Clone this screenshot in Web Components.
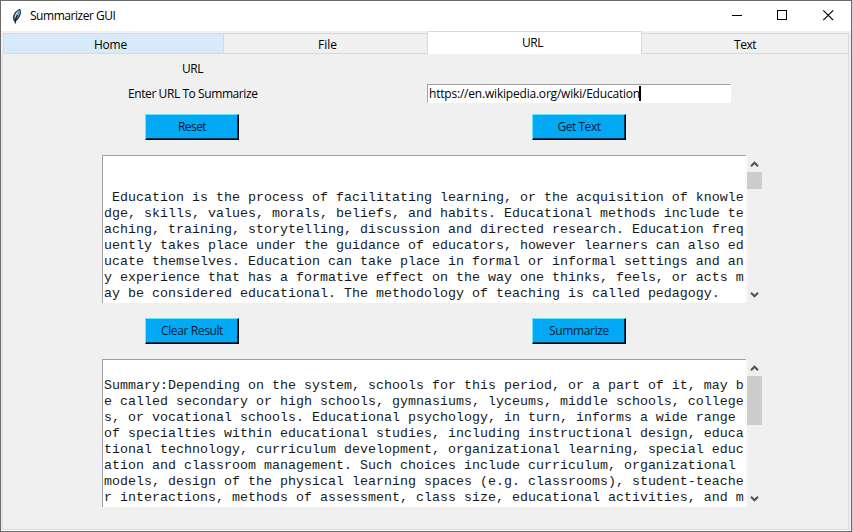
<!DOCTYPE html>
<html lang="en">
<head>
<meta charset="utf-8">
<title>Summarizer GUI</title>
<style>
html,body{margin:0;height:100%;overflow:hidden;background:#d4d4d4}
body{font:12px/16px "Open Sans","Noto Sans",sans-serif;color:#000}
</style>
</head>
<body>
<summarizer-app></summarizer-app>
<script>
function define(name, html, setup) {
  const template = document.createElement('template');
  template.innerHTML = html;
  customElements.define(name, class extends HTMLElement {
    connectedCallback() {
      if (this.shadowRoot) return;
      this.attachShadow({ mode: 'open' }).append(template.content.cloneNode(true));
      if (setup) setup(this, this.shadowRoot);
    }
  });
}

// Label whose tracking is adjusted so the text occupies a given width.
define('fit-label', `<style>
:host{display:inline-block;white-space:pre}
span{display:inline-block}
</style><span></span>`, (el, root) => {
  const span = root.querySelector('span');
  span.textContent = el.getAttribute('text');
  const width = +el.getAttribute('width');
  const n = span.textContent.length;
  const spacing = (width - span.getBoundingClientRect().width) / n;
  span.style.letterSpacing = spacing.toFixed(3) + 'px';
});

define('title-bar', `<style>
:host{display:flex;height:30px;background:#fff;align-items:center}
.feather{margin-left:10px;width:12px;height:17px;flex:none}
fit-label{margin-left:7px;flex:1}
.controls{display:flex;width:138px;height:30px}
.controls svg{width:46px;height:30px}
</style>
<svg class="feather" viewBox="0 0 12 17"><path d="M3 13.300C.8 9.500 2 4 8.900.8 11.300 3.500 9.500 10 4.900 13.300Z" fill="#22303f"/><path d="M3.500 11.500C2.500 8 4.500 4 8.400 1.900 9.900 4 8 9 4.800 11.800Z" fill="#6b9cc6"/><path d="M3.900 9.500C3.700 6.500 5.500 4 7.800 2.800L5 8.800Z" fill="#b5d3ea"/><path d="M6.500 7 4.500 11.500 4.200 15.500" fill="none" stroke="#101820" stroke-width="1.200"/></svg>
<fit-label text="Summarizer GUI" width="85.5"></fit-label>
<div class="controls">
<svg viewBox="0 0 46 30" shape-rendering="crispEdges"><path d="M19 14.500h10" stroke="#000"/></svg>
<svg viewBox="0 0 46 30" shape-rendering="crispEdges"><path d="M18.500 9.500h9v9h-9z" fill="none" stroke="#000"/></svg>
<svg viewBox="0 0 46 30"><path d="M18.300 9.300l9.900 9.900M28.200 9.300l-9.900 9.900" stroke="#000" stroke-width="1.150"/></svg>
</div>`);

define('tab-item', `<style>
:host{display:flex;box-sizing:border-box;height:21px;justify-content:center;align-items:center;background:#f0f0f0;border:1px solid #d9d9d9;border-left-width:0;padding-top:2px}
:host([hot]){background:#d8eaf9;border-left-width:1px;padding-right:6px}
:host(.file){padding-left:4px}
:host([active]){height:23px;background:#fff;border-bottom:0;border-left-width:1px;margin-left:-1px;padding:0 4px 0 0}
</style><slot></slot>`);

define('push-button', `<style>
:host{display:flex;box-sizing:border-box;width:94px;height:26px;background:#03a9f4;border:1px solid;border-color:#68e4ff #000 #000 #68e4ff;box-shadow:inset -1px -1px #003b5c;justify-content:center;align-items:center;color:#001c38}
</style><slot></slot>`);

define('text-entry', `<style>
:host{display:flex;box-sizing:border-box;width:304px;height:19px;background:#fff;border:1px solid;border-color:#a0a0a0 #fff #fff #a0a0a0;padding-left:1px;align-items:center}
i{width:2px;height:15px;background:#000;margin-left:-1px}
</style><slot></slot><i></i>`);

define('scroll-bar', `<style>
:host{display:flex;flex-direction:column;width:15px;height:148px;align-items:center;background:#f0f0f0}
svg{width:15px;height:17px;flex:none}
.thumb{width:15px;background:#cdcdcd}
.gap{flex:1}
path{fill:none;stroke:#505050;stroke-width:2}
</style>
<svg viewBox="0 0 15 17"><path d="M4 11.200 7.500 7.700 11 11.200"/></svg><div class="thumb"></div><div class="gap"></div>
<svg viewBox="0 0 15 17"><path d="M4 6.800 7.500 10.300 11 6.800"/></svg>`, (el, root) => {
  root.querySelector('.thumb').style.height = el.getAttribute('thumb') + 'px';
});

define('text-area', `<style>
:host{display:flex;width:660px;height:148px}
.page{box-sizing:border-box;width:645px;height:148px;background:#fff;border-left:1px solid #a0a0a0;border-top:1px solid #a0a0a0;border-right:2px solid #fbfbfb;padding:2px 0 0 1px;overflow:hidden}
::slotted(pre){margin:0;font:13.333px/16px "Liberation Mono",monospace;color:#1a1a1a}
</style><div class="page"><slot></slot></div><scroll-bar></scroll-bar>`, (el, root) => {
  const bar = root.querySelector('scroll-bar');
  bar.setAttribute('thumb', el.getAttribute('thumb'));
  if (bar.shadowRoot) bar.shadowRoot.querySelector('.thumb').style.height = el.getAttribute('thumb') + 'px';
});

define('summarizer-app', `<style>
:host{display:block;box-sizing:border-box;width:852px;height:532px;border:1px solid #6a6a6a;background:#f0f0f0}
.tabs{display:grid;grid-template-columns:221px 204px 214px 207px;align-items:end;height:23px;padding-left:2px}
.body{box-sizing:border-box;width:847px;height:476px;margin-left:1px;border:1px solid #dcdcdc;border-top:0;box-shadow:0 1px #fff;padding-left:99px}
.row{display:grid;grid-template-columns:183px 142px 304px}
.row>*{justify-self:start}
.labels{height:30px;padding-top:7px;box-sizing:border-box}
.labels fit-label{margin-left:80px}
.entry{height:19px;align-items:center}
.entry .cap{margin-left:26px}
.buttons{grid-template-columns:387px 94px;padding-left:43px}
.first{margin-top:11px;margin-bottom:15px}
.second{margin-top:15px;margin-bottom:15px}
</style>
<title-bar></title-bar>
<div class="tabs">
<tab-item hot><fit-label text="Home" width="33"></fit-label></tab-item>
<tab-item class="file"><fit-label text="File" width="19"></fit-label></tab-item>
<tab-item active><fit-label text="URL" width="21"></fit-label></tab-item>
<tab-item><fit-label text="Text" width="22"></fit-label></tab-item>
</div>
<div class="body">
<div class="row labels"><fit-label text="URL" width="21"></fit-label></div>
<div class="row entry"><fit-label class="cap" text="Enter URL To Summarize" width="129.5"></fit-label><span></span><text-entry><fit-label text="https://en.wikipedia.org/wiki/Education" width="211"></fit-label></text-entry></div>
<div class="row buttons first"><push-button><fit-label text="Reset" width="28"></fit-label></push-button><push-button><fit-label text="Get Text" width="43"></fit-label></push-button></div>
<text-area thumb="17"><pre>

 
 Education is the process of facilitating learning, or the acquisition of knowle
dge, skills, values, morals, beliefs, and habits. Educational methods include te
aching, training, storytelling, discussion and directed research. Education freq
uently takes place under the guidance of educators, however learners can also ed
ucate themselves. Education can take place in formal or informal settings and an
y experience that has a formative effect on the way one thinks, feels, or acts m
ay be considered educational. The methodology of teaching is called pedagogy.</pre></text-area>
<div class="row buttons second"><push-button><fit-label text="Clear Result" width="62"></fit-label></push-button><push-button><fit-label text="Summarize" width="60"></fit-label></push-button></div>
<text-area thumb="49"><pre>

Summary:Depending on the system, schools for this period, or a part of it, may b
e called secondary or high schools, gymnasiums, lyceums, middle schools, college
s, or vocational schools. Educational psychology, in turn, informs a wide range
of specialties within educational studies, including instructional design, educa
tional technology, curriculum development, organizational learning, special educ
ation and classroom management. Such choices include curriculum, organizational
models, design of the physical learning spaces (e.g. classrooms), student-teache
r interactions, methods of assessment, class size, educational activities, and m</pre></text-area>
</div>`);
</script>
</body>
</html>
